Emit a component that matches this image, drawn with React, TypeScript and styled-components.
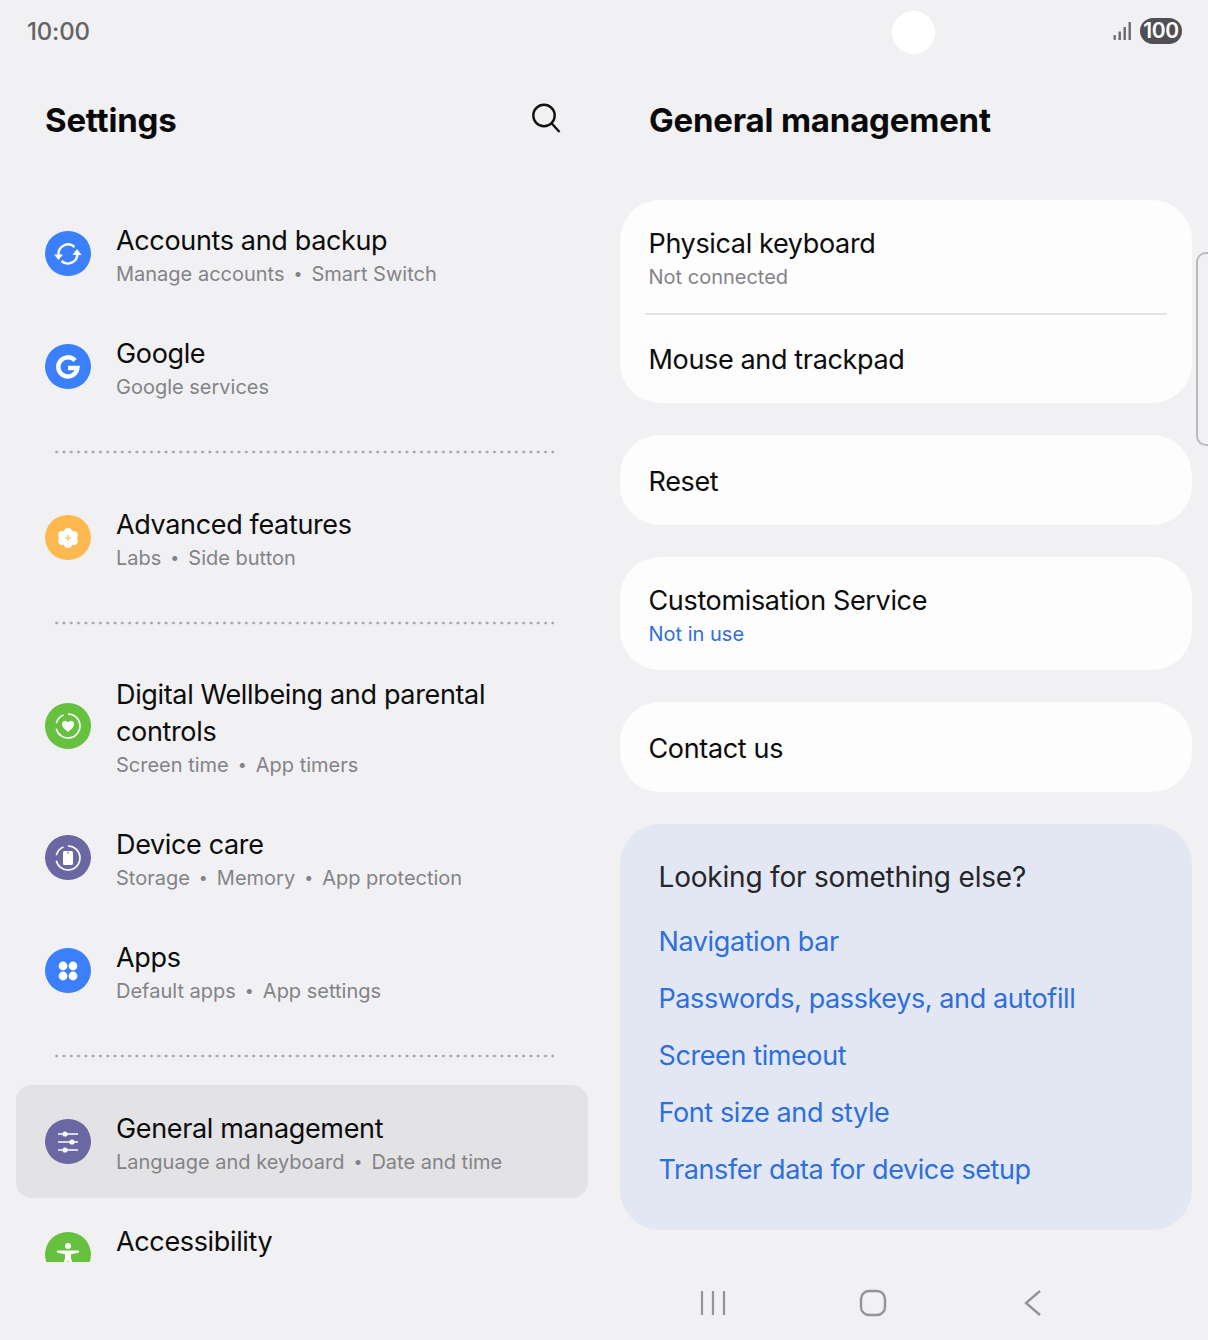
import React from "react";
import styled, { createGlobalStyle } from "styled-components";

const GlobalStyle = createGlobalStyle`
  html, body {
    margin: 0;
    padding: 0;
    background: #f1f1f4;
  }
  * {
    box-sizing: border-box;
  }
`;

const Screen = styled.div`
  position: relative;
  width: 1208px;
  height: 1340px;
  overflow: hidden;
  background: #f1f1f4;
  color: #0c0c0c;
  font-family: Inter, "Noto Sans", sans-serif;
`;

const StatusBar = styled.div`
  height: 62px;
  padding: 0 26px 0 27px;
  display: flex;
  align-items: center;
  justify-content: space-between;
`;

const Clock = styled.span`
  font-size: 24px;
  font-weight: 500;
  letter-spacing: -0.2px;
  color: #636365;
`;

const Camera = styled.div`
  position: absolute;
  left: 892px;
  top: 11px;
  width: 43px;
  height: 43px;
  border-radius: 50%;
  background: #fff;
`;

const StatusIcons = styled.div`
  display: flex;
  align-items: center;
  gap: 8px;
`;

const Battery = styled.span`
  width: 42px;
  height: 26px;
  border-radius: 13px;
  background: #505052;
  color: #fff;
  font-size: 21px;
  font-weight: 600;
  line-height: 26px;
  text-align: center;
  letter-spacing: -0.3px;
`;

const Panes = styled.div`
  display: flex;
  height: 1200px;
`;

const LeftPane = styled.div`
  width: 604px;
  padding: 0 16px;
`;

const RightPane = styled.div`
  flex: 1;
  padding: 0 16px;
`;

const LeftHeader = styled.div`
  height: 115px;
  padding: 0 26px 0 29px;
  display: flex;
  align-items: center;
  justify-content: space-between;

  svg {
    margin-bottom: 4px;
  }
`;

const RightHeader = styled.div`
  height: 138px;
  padding: 0 0 22px 29px;
  display: flex;
  align-items: center;
`;

const PageTitle = styled.h1`
  margin: 0;
  font-size: 33px;
  font-weight: 700;
  color: #0a0a0a;
  letter-spacing: -0.2px;
`;

const ListViewport = styled.div`
  margin-top: 20px;
  height: 1065px;
  overflow: hidden;
`;

const Row = styled.div<{ $active?: boolean; $tall?: boolean }>`
  height: ${({ $tall }) => ($tall ? "150px" : "113px")};
  padding: 0 20px 0 29px;
  display: flex;
  align-items: center;
  gap: 25.5px;
  border-radius: 16px;
  background: ${({ $active }) => ($active ? "#e3e3e6" : "transparent")};
`;

const IconCircle = styled.div<{ $color: string }>`
  flex: none;
  width: 45.5px;
  height: 45.5px;
  border-radius: 50%;
  background: ${({ $color }) => $color};
  display: flex;
  align-items: center;
  justify-content: center;
`;

const RowText = styled.div`
  display: flex;
  flex-direction: column;
  min-width: 0;
  padding-top: 3px;
`;

const RowTitle = styled.div`
  font-size: 27px;
  line-height: 37px;
  letter-spacing: -0.35px;
  color: #0c0c0c;
`;

const RowSub = styled.div`
  margin-top: 1px;
  min-height: 28px;
  font-size: 20px;
  line-height: 28px;
  color: #838386;
`;

const Sep = styled.span`
  margin: 0 9px;
  font-size: 16px;
  line-height: 0;
  vertical-align: 2px;
`;

const DotRule = styled.div<{ $height: number }>`
  height: ${({ $height }) => $height}px;
  margin: 0 34px 0 37px;
  background-image: radial-gradient(circle, #a5a5a9 1.2px, transparent 1.7px);
  background-size: 7.3px 4px;
  background-repeat: repeat-x;
  background-position: 0 center;
`;

const CardStack = styled.div`
  display: flex;
  flex-direction: column;
  gap: 32px;
`;

const Card = styled.div`
  background: #fdfdfe;
  border-radius: 40px;
  overflow: hidden;
`;

const CardRow = styled.div<{ $height: number; $flush?: boolean }>`
  height: ${({ $height }) => $height}px;
  padding: ${({ $flush }) => ($flush ? "0" : "2px")} 28.5px 0;
  display: flex;
  flex-direction: column;
  justify-content: center;
`;

const CardTitle = styled.div`
  font-size: 27px;
  line-height: 37px;
  letter-spacing: -0.35px;
  color: #0c0c0c;
`;

const CardSub = styled.div<{ $blue?: boolean }>`
  font-size: 20px;
  line-height: 28px;
  margin-top: 1px;
  color: ${({ $blue }) => ($blue ? "#2d6fdc" : "#838386")};
`;

const CardRule = styled.div`
  height: 2px;
  margin: 0 25px;
  background: #e3e3e7;
`;

const SuggestCard = styled.div`
  height: 406px;
  padding: 34px 38.5px 0;
  background: #e3e7f3;
  border-radius: 40px;
`;

const SuggestTitle = styled.div`
  font-size: 28px;
  line-height: 38px;
  letter-spacing: -0.2px;
  color: #26262a;
  margin-bottom: 17px;
`;

const SuggestLink = styled.div`
  height: 57px;
  font-size: 27px;
  line-height: 57px;
  letter-spacing: -0.4px;
  color: #2d6fdc;
`;

const ScrollHandle = styled.div`
  position: absolute;
  right: 0;
  top: 252px;
  width: 12px;
  height: 194px;
  border: 2px solid #b9b9bc;
  border-right: 0;
  border-radius: 10px 0 0 10px;
`;

const NavBar = styled.div`
  position: absolute;
  left: 604px;
  right: 0;
  bottom: 0;
  height: 74px;
  padding-right: 66px;
  display: flex;
  align-items: center;
  justify-content: center;
`;

const NavSlot = styled.div`
  width: 160px;
  display: flex;
  justify-content: center;
`;

const SubLine: React.FC<{ parts: string[] }> = ({ parts }) => (
  <RowSub>
    {parts.map((part, i) => (
      <React.Fragment key={part}>
        {i > 0 && <Sep>•</Sep>}
        {part}
      </React.Fragment>
    ))}
  </RowSub>
);

const SyncIcon = () => (
  <svg width="30" height="30" viewBox="0 0 30 30" fill="none">
    <path d="M5.6 16A9.5 9.5 0 0 1 21.5 8" stroke="#fff" strokeWidth="2.4" />
    <path d="M24.4 15A9.5 9.5 0 0 1 8.5 22" stroke="#fff" strokeWidth="2.4" />
    <path d="M19.5 16h9L24 10z" fill="#fff" />
    <path d="M1 15.500h9L5.500 21z" fill="#fff" />
  </svg>
);

const GoogleIcon = () => (
  <svg width="28" height="28" viewBox="0 0 28 28" fill="none">
    <path d="M21 7.500A9.600 9.600 0 1 0 23.400 15H14" stroke="#fff" strokeWidth="4.400" />
  </svg>
);

const FlowerIcon = () => (
  <svg width="24" height="24" viewBox="0 0 24 24">
    <g fill="#fff">
      <circle cx="12" cy="6" r="4" />
      <circle cx="12" cy="18" r="4" />
      <circle cx="6.200" cy="9" r="4" />
      <circle cx="17.800" cy="9" r="4" />
      <circle cx="6.200" cy="15" r="4" />
      <circle cx="17.800" cy="15" r="4" />
      <circle cx="12" cy="12" r="5" />
    </g>
    <path d="M12 9v6M9 12h6" stroke="#fdb94f" strokeWidth="1.200" />
  </svg>
);

const Ring = () => (
  <>
    <path d="M14 2A12 12 0 1 1 2.300 16.700" stroke="#fff" strokeWidth="1.600" />
    <path d="M2.300 11.300A12 12 0 0 1 9.500 2.900" stroke="#fff" strokeWidth="1.600" />
  </>
);

const WellbeingIcon = () => (
  <svg width="28" height="28" viewBox="0 0 28 28" fill="none">
    <Ring />
    <path
      d="M14 20c-1-1-6-4-6-7.700C8 10 9.600 8.800 11 8.800c1.300 0 2.300.7 3 1.800.7-1.100 1.700-1.800 3-1.800 1.400 0 3 1.200 3 3.500C20 16 15 19 14 20z"
      fill="#fff"
    />
  </svg>
);

const DeviceCareIcon = () => (
  <svg width="28" height="28" viewBox="0 0 28 28" fill="none">
    <Ring />
    <rect x="9" y="7" width="10" height="14" rx="1.500" fill="#fff" />
    <rect x="13.300" y="7.800" width="1.400" height="1.600" fill="#6a67a3" />
  </svg>
);

const AppsIcon = () => (
  <svg width="24" height="24" viewBox="0 0 24 24" fill="#fff">
    <circle cx="7" cy="7" r="4.400" />
    <circle cx="17" cy="7" r="4.400" />
    <circle cx="7" cy="17" r="4.400" />
    <circle cx="17" cy="17" r="4.400" />
  </svg>
);

const SlidersIcon = () => (
  <svg width="26" height="26" viewBox="0 0 26 26" fill="none" stroke="#fff" strokeWidth="1.500">
    <path d="M3 5h20M3 13h20M3 21h20" />
    <g fill="#fff" stroke="none">
      <circle cx="10" cy="5" r="2.600" />
      <circle cx="17" cy="13" r="2.600" />
      <circle cx="10" cy="21" r="2.600" />
    </g>
  </svg>
);

const AccessIcon = () => (
  <svg width="30" height="30" viewBox="0 0 30 30" fill="#fff">
    <circle cx="15" cy="6" r="3" />
    <path d="M4 10.500h22v2l-8 1.800v4l2.800 8.700h-3L15 20l-2.800 7h-3l2.800-8.700v-4l-8-1.800z" />
  </svg>
);

export default function App() {
  return (
    <Screen>
      <GlobalStyle />
      <StatusBar>
        <Clock>10:00</Clock>
        <StatusIcons>
          <svg width="19" height="20" viewBox="0 0 19 20" fill="#6b6b6d">
            <rect x="0.500" y="14" width="2.400" height="5" rx="1" />
            <rect x="5.500" y="10.500" width="2.400" height="8.500" />
            <rect x="10.500" y="6" width="2.400" height="13" />
            <rect x="15.500" y="1" width="2.400" height="18" />
          </svg>
          <Battery>100</Battery>
        </StatusIcons>
      </StatusBar>
      <Camera />
      <Panes>
        <LeftPane>
          <LeftHeader>
            <PageTitle>Settings</PageTitle>
            <svg width="32" height="32" viewBox="0 0 32 32" fill="none" stroke="#111" strokeWidth="2.400">
              <circle cx="14" cy="13.500" r="10.700" />
              <path d="M21.800 21.500 29.500 30" />
            </svg>
          </LeftHeader>
          <ListViewport>
            <Row>
              <IconCircle $color="#3b7ffb"><SyncIcon /></IconCircle>
              <RowText>
                <RowTitle>Accounts and backup</RowTitle>
                <SubLine parts={["Manage accounts", "Smart Switch"]} />
              </RowText>
            </Row>
            <Row>
              <IconCircle $color="#3b7ffb"><GoogleIcon /></IconCircle>
              <RowText>
                <RowTitle>Google</RowTitle>
                <SubLine parts={["Google services"]} />
              </RowText>
            </Row>
            <DotRule $height={58} />
            <Row>
              <IconCircle $color="#fdb94f"><FlowerIcon /></IconCircle>
              <RowText>
                <RowTitle>Advanced features</RowTitle>
                <SubLine parts={["Labs", "Side button"]} />
              </RowText>
            </Row>
            <DotRule $height={57} />
            <Row $tall>
              <IconCircle $color="#66c13f"><WellbeingIcon /></IconCircle>
              <RowText>
                <RowTitle>Digital Wellbeing and parental controls</RowTitle>
                <SubLine parts={["Screen time", "App timers"]} />
              </RowText>
            </Row>
            <Row>
              <IconCircle $color="#6a67a3"><DeviceCareIcon /></IconCircle>
              <RowText>
                <RowTitle>Device care</RowTitle>
                <SubLine parts={["Storage", "Memory", "App protection"]} />
              </RowText>
            </Row>
            <Row>
              <IconCircle $color="#3b7ffb"><AppsIcon /></IconCircle>
              <RowText>
                <RowTitle>Apps</RowTitle>
                <SubLine parts={["Default apps", "App settings"]} />
              </RowText>
            </Row>
            <DotRule $height={58} />
            <Row $active>
              <IconCircle $color="#6a67a3"><SlidersIcon /></IconCircle>
              <RowText>
                <RowTitle>General management</RowTitle>
                <SubLine parts={["Language and keyboard", "Date and time"]} />
              </RowText>
            </Row>
            <Row>
              <IconCircle $color="#66c13f"><AccessIcon /></IconCircle>
              <RowText>
                <RowTitle>Accessibility</RowTitle>
                <RowSub />
              </RowText>
            </Row>
          </ListViewport>
        </LeftPane>
        <RightPane>
          <RightHeader>
            <PageTitle>General management</PageTitle>
          </RightHeader>
          <CardStack>
            <Card>
              <CardRow $height={113}>
                <CardTitle>Physical keyboard</CardTitle>
                <CardSub>Not connected</CardSub>
              </CardRow>
              <CardRule />
              <CardRow $height={88} $flush>
                <CardTitle>Mouse and trackpad</CardTitle>
              </CardRow>
            </Card>
            <Card>
              <CardRow $height={90}>
                <CardTitle>Reset</CardTitle>
              </CardRow>
            </Card>
            <Card>
              <CardRow $height={113}>
                <CardTitle>Customisation Service</CardTitle>
                <CardSub $blue>Not in use</CardSub>
              </CardRow>
            </Card>
            <Card>
              <CardRow $height={90}>
                <CardTitle>Contact us</CardTitle>
              </CardRow>
            </Card>
            <SuggestCard>
              <SuggestTitle>Looking for something else?</SuggestTitle>
              <SuggestLink>Navigation bar</SuggestLink>
              <SuggestLink>Passwords, passkeys, and autofill</SuggestLink>
              <SuggestLink>Screen timeout</SuggestLink>
              <SuggestLink>Font size and style</SuggestLink>
              <SuggestLink>Transfer data for device setup</SuggestLink>
            </SuggestCard>
          </CardStack>
        </RightPane>
      </Panes>
      <ScrollHandle />
      <NavBar>
        <NavSlot>
          <svg width="26" height="26" viewBox="0 0 26 26" stroke="#949497" strokeWidth="2.200">
            <path d="M2 1v24M13 1v24M24 1v24" />
          </svg>
        </NavSlot>
        <NavSlot>
          <svg width="28" height="28" viewBox="0 0 28 28" fill="none" stroke="#949497" strokeWidth="2.400">
            <rect x="2" y="2" width="24" height="24" rx="8" />
          </svg>
        </NavSlot>
        <NavSlot>
          <svg width="20" height="28" viewBox="0 0 20 28" fill="none" stroke="#949497" strokeWidth="2.400">
            <path d="M17 2 3 14l14 12" />
          </svg>
        </NavSlot>
      </NavBar>
    </Screen>
  );
}
